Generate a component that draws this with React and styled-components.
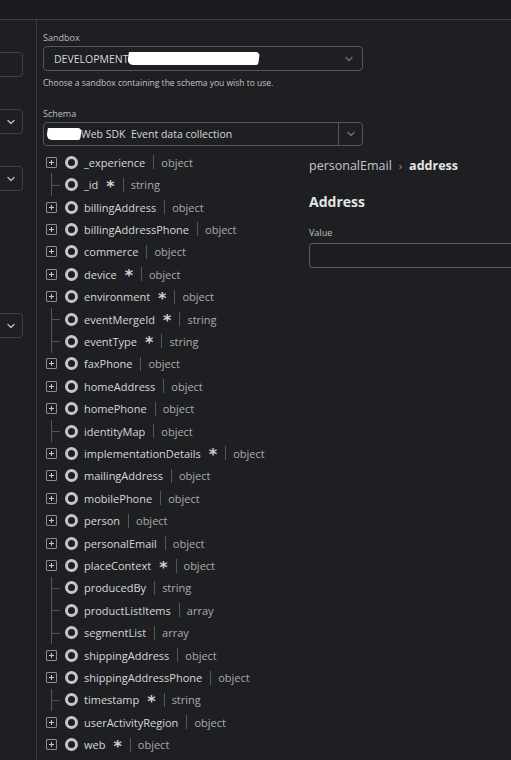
import React from "react";
import styled, { createGlobalStyle } from "styled-components";

const GlobalStyle = createGlobalStyle`
  html, body { margin: 0; padding: 0; background: #1e1f22; }
  body { font-family: "Open Sans", "Noto Sans", sans-serif; color: #d4d4d4; }
  * { box-sizing: border-box; }
`;

const Page = styled.div`
  width: 511px;
  height: 760px;
  overflow: hidden;
  background: #1e1f22;
`;

const TopBar = styled.div`
  height: 20px;
  background: #1a1b1e;
  border-bottom: 1px solid #3b3c3f;
`;

const Body = styled.div`
  display: flex;
  height: 740px;
`;

const Rail = styled.div`
  width: 37px;
  flex: none;
  border-right: 1px solid #3a3b3e;
  overflow: hidden;
  padding-top: 32px;
  display: flex;
  flex-direction: column;
`;

const RailField = styled.div`
  width: 60px;
  height: 25px;
  margin-left: -37px;
  margin-top: ${(p) => p.$gap}px;
  border: 1px solid #3f4044;
  border-radius: 4px;
  display: flex;
  align-items: center;
  justify-content: flex-end;
  padding-right: 6px;
  color: #b8b8b8;
`;

const Main = styled.div`
  flex: 1;
  padding: 12px 0 0 6px;
  min-width: 0;
`;

const Label = styled.div`
  font-size: 9px;
  color: #bdbdbd;
  line-height: 12px;
  height: 12px;
  margin-bottom: 2px;
`;

const Select = styled.div`
  width: 320px;
  height: 25px;
  border: 1px solid #55565a;
  border-radius: 4px;
  display: flex;
  align-items: center;
  padding-left: 10px;
  font-size: 10.5px;
  color: #d8d8d8;
`;

const SelectText = styled.span`
  flex: 1;
  display: flex;
  align-items: center;
  white-space: nowrap;
`;

const Chevron = styled.span`
  width: 26px;
  display: flex;
  align-items: center;
  justify-content: center;
  color: #6f7074;
`;

const Redact = styled.span`
  display: inline-block;
  width: ${(p) => p.$w}px;
  height: ${(p) => p.$h}px;
  background: #ffffff;
  border-radius: 1px 4px 2px 6px;
  transform: skewX(-8deg);
`;

const Help = styled.div`
  font-size: 8.5px;
  color: #c3c3c3;
  margin-top: 6px;
  line-height: 12px;
  margin-bottom: 19px;
`;

const Combo = styled.div`
  width: 320px;
  height: 24px;
  border: 1px solid #55565a;
  border-radius: 4px;
  display: flex;
  align-items: stretch;
  font-size: 10.5px;
  color: #d8d8d8;
`;

const ComboText = styled.div`
  flex: 1;
  display: flex;
  align-items: center;
  padding-left: 3px;
  white-space: nowrap;
`;

const ComboButton = styled.div`
  width: 24px;
  border-left: 1px solid #55565a;
  display: flex;
  align-items: center;
  justify-content: center;
  color: #6f7074;
`;

const Split = styled.div`
  display: flex;
  margin-top: 5px;
`;

const Tree = styled.div`
  width: 266px;
  flex: none;
  display: flex;
  flex-direction: column;
  padding-left: 3px;
`;

const Row = styled.div`
  height: 22.42px;
  display: flex;
  align-items: center;
  font-size: 11px;
`;

const Toggle = styled.span`
  width: 11px;
  height: 11px;
  border: 1px solid #8c8d91;
  border-radius: 1px;
  position: relative;
  flex: none;
  &::before, &::after {
    content: "";
    position: absolute;
    background: #c9c9c9;
  }
  &::before { left: 2px; right: 2px; top: 4px; height: 1px; }
  &::after { top: 2px; bottom: 2px; left: 4px; width: 1px; }
`;

const Branch = styled.span`
  width: 11px;
  height: 100%;
  position: relative;
  flex: none;
  &::before {
    content: "";
    position: absolute;
    left: 5px;
    top: 0;
    bottom: 0;
    width: 1px;
    background: #56575b;
  }
  &::after {
    content: "";
    position: absolute;
    left: 5px;
    width: 9px;
    top: 50%;
    height: 1px;
    background: #56575b;
  }
`;

const Ring = styled.span`
  width: 13px;
  height: 13px;
  border-radius: 50%;
  border: 3px solid #c6c6c6;
  margin-left: 8px;
  flex: none;
`;

const Name = styled.span`
  margin-left: 6px;
  color: #d7d7d7;
  white-space: nowrap;
`;

const Star = styled.span`
  margin-left: 8px;
  color: #d0d0d0;
  font-size: 16px;
  line-height: 1;
  font-family: "DejaVu Sans", sans-serif;
  font-weight: bold;
  position: relative;
  top: 2px;
`;

const Sep = styled.span`
  width: 1px;
  height: 14px;
  background: #55565a;
  margin: 0 7px 0 8px;
  flex: none;
`;

const Type = styled.span`
  color: #ababab;
  white-space: nowrap;
`;

const Detail = styled.div`
  flex: 1;
  padding-top: 3px;
`;

const Crumbs = styled.div`
  display: flex;
  align-items: center;
  font-size: 12.5px;
  color: #c6c6c6;
  height: 22px;
`;

const CrumbSep = styled.span`
  margin: 0 7px;
  color: #9a9a9a;
  font-size: 11px;
`;

const CrumbCurrent = styled.span`
  font-weight: 700;
  color: #e6e6e6;
`;

const Heading = styled.div`
  font-size: 14px;
  font-weight: 700;
  color: #e4e4e4;
  margin-top: 16px;
  line-height: 20px;
`;

const FieldLabel = styled.div`
  font-size: 9px;
  color: #c0c0c0;
  margin-top: 15px;
  line-height: 12px;
`;

const Input = styled.div`
  height: 25px;
  margin-top: 4px;
  border: 1px solid #5a5b5f;
  border-right: none;
  border-radius: 4px 0 0 4px;
  background: #1c1d20;
`;

const ChevronIcon = ({ size = 10 }) => (
  <svg width={size} height={size} viewBox="0 0 10 10" fill="none">
    <path d="M2 3.5 L5 6.5 L8 3.5" stroke="currentColor" strokeWidth="1.4" strokeLinecap="round" strokeLinejoin="round" />
  </svg>
);

const items = [
  ["_experience", false, "object", true],
  ["_id", true, "string", false],
  ["billingAddress", false, "object", true],
  ["billingAddressPhone", false, "object", true],
  ["commerce", false, "object", true],
  ["device", true, "object", true],
  ["environment", true, "object", true],
  ["eventMergeId", true, "string", false],
  ["eventType", true, "string", false],
  ["faxPhone", false, "object", true],
  ["homeAddress", false, "object", true],
  ["homePhone", false, "object", true],
  ["identityMap", false, "object", false],
  ["implementationDetails", true, "object", true],
  ["mailingAddress", false, "object", true],
  ["mobilePhone", false, "object", true],
  ["person", false, "object", true],
  ["personalEmail", false, "object", true],
  ["placeContext", true, "object", true],
  ["producedBy", false, "string", false],
  ["productListItems", false, "array", false],
  ["segmentList", false, "array", false],
  ["shippingAddress", false, "object", true],
  ["shippingAddressPhone", false, "object", true],
  ["timestamp", true, "string", false],
  ["userActivityRegion", false, "object", true],
  ["web", true, "object", true],
];

export default function App() {
  return (
    <Page>
      <GlobalStyle />
      <TopBar />
      <Body>
        <Rail>
          <RailField $gap={0} />
          <RailField $gap={32}><ChevronIcon /></RailField>
          <RailField $gap={32}><ChevronIcon /></RailField>
          <RailField $gap={122}><ChevronIcon /></RailField>
        </Rail>
        <Main>
          <Label>Sandbox</Label>
          <Select>
            <SelectText>
              DEVELOPMENT
              <Redact $w={131} $h={13} />
            </SelectText>
            <Chevron><ChevronIcon /></Chevron>
          </Select>
          <Help>Choose a sandbox containing the schema you wish to use.</Help>
          <Label>Schema</Label>
          <Combo>
            <ComboText>
              <Redact $w={34} $h={12} />
              Web SDK&nbsp; Event data collection
            </ComboText>
            <ComboButton><ChevronIcon /></ComboButton>
          </Combo>
          <Split>
            <Tree>
              {items.map(([name, req, type, exp]) => (
                <Row key={name}>
                  {exp ? <Toggle /> : <Branch />}
                  <Ring />
                  <Name>{name}</Name>
                  {req && <Star>*</Star>}
                  <Sep />
                  <Type>{type}</Type>
                </Row>
              ))}
            </Tree>
            <Detail>
              <Crumbs>
                personalEmail
                <CrumbSep>›</CrumbSep>
                <CrumbCurrent>address</CrumbCurrent>
              </Crumbs>
              <Heading>Address</Heading>
              <FieldLabel>Value</FieldLabel>
              <Input />
            </Detail>
          </Split>
        </Main>
      </Body>
    </Page>
  );
}
